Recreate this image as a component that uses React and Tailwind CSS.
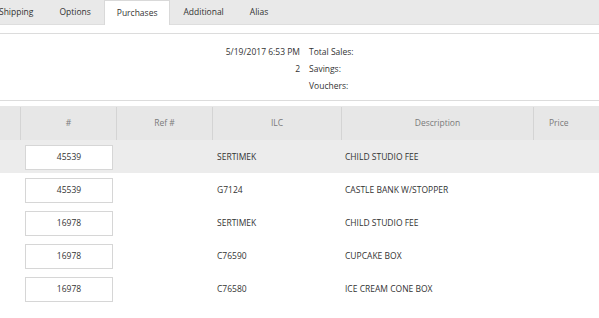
import React from "react";

const tabs = ["Shipping", "Options", "Purchases", "Additional", "Alias"];
const rows = [
  ["45539", "SERTIMEK", "CHILD STUDIO FEE"],
  ["45539", "G7124", "CASTLE BANK W/STOPPER"],
  ["16978", "SERTIMEK", "CHILD STUDIO FEE"],
  ["16978", "C76590", "CUPCAKE BOX"],
  ["16978", "C76580", "ICE CREAM CONE BOX"],
];

export default function App() {
  return (
    <div
      className="w-[599px] h-[318px] overflow-hidden bg-white text-[#333] text-[8.5px]"
      style={{ fontFamily: '"Open Sans", "Noto Sans", sans-serif' }}
    >
      <div className="h-[25px] bg-[#e9e9e9] border-b border-[#dedede] flex items-end">
        {tabs.map((t, i) => (
          <div
            key={t}
            className={
              (i === 0 ? "ml-[-14px] " : "") +
              (t === "Purchases"
                ? "h-[25px] mb-[-1px] bg-white border border-b-0 border-[#d9d9d9] px-[12px] "
                : "h-[24px] px-[13px] ") +
              "flex items-center"
            }
          >
            {t}
          </div>
        ))}
      </div>
      <div className="h-[8px]" />
      <div className="border-t border-b border-[#dcdcdc] h-[68px] pt-[9px]">
        <div className="grid grid-cols-[300px_1fr] gap-x-[9px] leading-[17px]">
          <div className="text-right">5/19/2017 6:53 PM</div>
          <div>Total Sales:</div>
          <div className="text-right">2</div>
          <div>Savings:</div>
          <div className="text-right"></div>
          <div>Vouchers:</div>
        </div>
      </div>
      <div className="h-[5px]" />
      <div className="grid grid-cols-[20px_96px_96px_129px_192px_1fr] bg-[#e7e7e7] h-[34px] text-[#7a7a7a] pt-[1px]">
        <div />
        <div className="border-l border-[#d4d4d4] flex items-center justify-center">#</div>
        <div className="border-l border-[#d4d4d4] flex items-center justify-center">Ref #</div>
        <div className="border-l border-[#d4d4d4] flex items-center justify-center">ILC</div>
        <div className="border-l border-[#d4d4d4] flex items-center justify-center">Description</div>
        <div className="border-l border-[#d4d4d4] flex items-center pl-[15px]">Price</div>
      </div>
      {rows.map((r, i) => (
        <div
          key={i}
          className={
            "grid grid-cols-[20px_96px_96px_129px_192px_1fr] h-[33px] pt-[5px] " +
            (i === 0 ? "bg-[#ececec]" : "bg-white")
          }
        >
          <div />
          <div className="pl-[5px] pr-[3px]">
            <div className="h-[25px] w-[88px] bg-white border border-[#d6d6d6] flex items-center justify-center">
              {r[0]}
            </div>
          </div>
          <div />
          <div className="pl-[5px] h-[25px] flex items-center">{r[1]}</div>
          <div className="pl-[4px] h-[25px] flex items-center">{r[2]}</div>
          <div />
        </div>
      ))}
    </div>
  );
}
